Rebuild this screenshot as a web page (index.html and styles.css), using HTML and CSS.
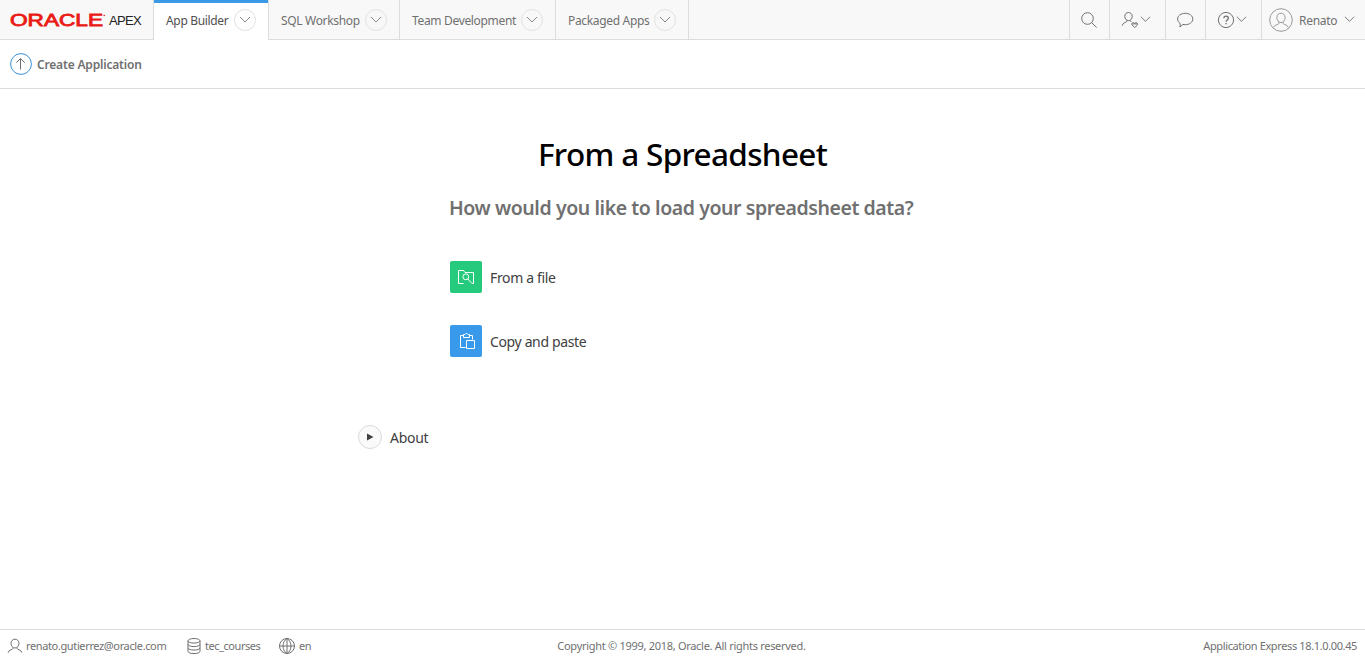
FILE: index.html
```
<!DOCTYPE html>
<html lang="en">
<head>
<meta charset="utf-8">
<title>Create Application</title>
<link rel="stylesheet" href="styles.css">
</head>
<body>
<svg class="defs" aria-hidden="true">
  <symbol id="chev" viewBox="0 0 12 12"><path d="M1 3l5 5 5-5"/></symbol>
  <symbol id="user" viewBox="0 0 16 16"><path d="M8 1.200c2.300 0 4 1.700 4 4.200S10.200 10 8 10 4 7.900 4 5.400s1.700-4.200 4-4.200zM6 9.600v.9c0 1.300-4.500 1-4.900 4.200M10 9.600v.9c0 1.300 4.500 1 4.900 4.200"/></symbol>
</svg>
<header class="header">
  <div class="brand">
    <svg class="logo" width="96" height="14" viewBox="0 0 96 14"><text class="logo-text" x="0" y="12.500" textLength="93" lengthAdjust="spacingAndGlyphs">ORACLE</text><circle class="logo-dot" cx="94.200" cy="2.500" r=".8"/></svg>
    <span class="apex">APEX</span>
  </div>
  <nav class="tabs">
    <a class="tab tab-builder active"><span class="label">App Builder</span><span class="drop"><svg width="12" height="12"><use href="#chev"/></svg></span></a>
    <a class="tab tab-sql"><span class="label">SQL Workshop</span><span class="drop"><svg width="12" height="12"><use href="#chev"/></svg></span></a>
    <a class="tab tab-team"><span class="label">Team Development</span><span class="drop"><svg width="12" height="12"><use href="#chev"/></svg></span></a>
    <a class="tab tab-apps"><span class="label">Packaged Apps</span><span class="drop"><svg width="12" height="12"><use href="#chev"/></svg></span></a>
  </nav>
  <div class="tools">
    <a class="tool tool-small"><svg width="18" height="18" viewBox="0 0 18 18"><circle cx="7.500" cy="7.500" r="5.800"/><path d="M11.700 11.700l5 4.800"/></svg></a>
    <a class="tool tool-wide"><svg width="18" height="18" viewBox="0 0 18 18"><path d="M7.500 1.500c2.100 0 3.700 1.600 3.700 3.900S9.600 9.700 7.500 9.700 3.800 7.700 3.800 5.400s1.600-3.900 3.700-3.900zM5.800 9.500v.8c0 1.300-4.200 1-4.600 4.400M9.400 9.500l.8 1.400"/><path d="M13.700 16.500l-2.400-2.200c-1.600-1.700.9-3.900 2.400-1.900 1.500-2 4 .2 2.400 1.900zM11.200 12.900h5"/></svg><svg class="chev" width="11" height="11"><use href="#chev"/></svg></a>
    <a class="tool tool-small"><svg width="18" height="18" viewBox="0 0 18 18"><path d="M9.200 2.300c4.300 0 7.600 2.500 7.600 5.700s-3.400 5.700-7.600 5.700c-.9 0-1.700-.1-2.500-.3-.8 1.300-1.700 2-2.900 2.500.5-1.200.5-2.300.3-3.500C2.500 11.400 1.600 9.800 1.600 8c0-3.200 3.300-5.700 7.600-5.700z"/></svg></a>
    <a class="tool tool-wide"><svg width="18" height="18" viewBox="0 0 18 18"><circle cx="9" cy="9" r="7.600"/><path class="bold" d="M6.900 7.200c0-2.900 4.400-2.800 4.400 0 0 1.700-2.200 1.700-2.200 3.500M9.100 12v1.300"/></svg><svg class="chev" width="11" height="11"><use href="#chev"/></svg></a>
    <a class="tool tool-user"><svg class="avatar" width="24" height="24" viewBox="0 0 24 24"><circle cx="12" cy="12" r="11.300"/><path d="M12 5.200c2.500 0 4.100 1.800 4.100 4.400S14.400 14.600 12 14.600s-4.100-2.400-4.100-5 1.600-4.400 4.100-4.400zM10 14v1.300c0 1.400-4.500 1-5.200 3.900M14 14v1.300c0 1.400 4.500 1 5.200 3.900"/></svg><span class="label username">Renato</span><svg class="chev" width="11" height="11"><use href="#chev"/></svg></a>
  </div>
</header>
<div class="crumbs">
  <svg width="22" height="22" viewBox="0 0 22 22"><circle class="ring" cx="11" cy="11" r="10.400"/><path d="M10.500 16.500v-11M6.300 9.700l4.200-4.200 4.200 4.200"/></svg>
  <span class="crumb">Create Application</span>
</div>
<main class="main">
  <h1 class="title">From a Spreadsheet</h1>
  <div class="wizard">
    <h2 class="question">How would you like to load your spreadsheet data?</h2>
    <a class="option"><span class="tile green"><svg width="18" height="18" viewBox="0 0 18 18"><path d="M6.500 15.500h-5v-13h5l1.500 2h8.500v11h-1.500L10.900 11"/><circle cx="8.800" cy="8.800" r="2.900"/></svg></span><span class="option-text">From a file</span></a>
    <a class="option"><span class="tile blue"><svg width="18" height="18" viewBox="0 0 18 18"><path d="M5.500 3.500h-3v12h5M11.500 3.500h3v4M5.500 5.500v-3H7c.3-1.300 2.700-1.300 3 0h1.500v3zM8.500 8.500h8v8h-8z"/></svg></span><span class="option-text">Copy and paste</span></a>
  </div>
  <div class="about"><span class="play"><svg width="8" height="8" viewBox="0 0 8 8"><path d="M1 .5L7.500 4 1 7.500z"/></svg></span><span class="about-text">About</span></div>
</main>
<footer class="footer">
  <div class="foot-left">
    <span class="foot-item mail"><svg width="16" height="16"><use href="#user"/></svg><span>renato.gutierrez@oracle.com</span></span>
    <span class="foot-item db"><svg width="16" height="18" viewBox="0 0 16 18"><ellipse cx="8" cy="3.800" rx="6" ry="2.300"/><path d="M2 3.800v10.500c0 3 12 3 12 0V3.800M2 7.300c0 3 12 3 12 0M2 10.800c0 3 12 3 12 0"/></svg><span>tec_courses</span></span>
    <span class="foot-item lang"><svg width="18" height="18" viewBox="0 0 18 18"><circle cx="9" cy="9" r="7.500"/><path d="M1.500 9h15M9 1.500v15M9 1.500c-5.300 3-5.300 12 0 15M9 1.500c5.300 3 5.300 12 0 15"/></svg><span>en</span></span>
  </div>
  <div class="copyright">Copyright © 1999, 2018, Oracle. All rights reserved.</div>
  <div class="version">Application Express 18.1.0.00.45</div>
</footer>
</body>
</html>
```
FILE: styles.css
```
* { box-sizing: border-box; }
body {
  margin: 0;
  height: 660px;
  display: flex;
  flex-direction: column;
  overflow: hidden;
  background: #fff;
  color: #404040;
  font-family: "Noto Sans", "Open Sans", sans-serif;
  font-size: 12px;
}
.defs { display: none; }
svg { flex: none; fill: none; stroke: #707070; stroke-width: 1; }
span, div, h1, h2 { white-space: nowrap; }

.header { display: flex; height: 40px; flex: none; background: #f8f8f8; border-bottom: 1px solid #dcdcdc; }
.brand { display: flex; align-items: center; width: 154px; padding-left: 10px; border-right: 1px solid #dcdcdc; }
.logo { overflow: visible; }
.logo-text { font: 16px "Liberation Sans", sans-serif; fill: #ea1b16; stroke: #ea1b16; stroke-width: .8; }
.logo-dot { fill: #ea1b16; stroke: none; }
.apex { margin: 2px 0 0 3px; font: 13px "Liberation Sans", sans-serif; letter-spacing: -.7px; color: #222; }
.tabs { display: flex; }
.tab { display: flex; align-items: center; justify-content: space-between; height: 39px; padding: 0 12px; border-right: 1px solid #dcdcdc; letter-spacing: -.33px; }
.tab.active { height: 40px; padding-bottom: 1px; background: #fff; box-shadow: inset 0 3px #3b99e8; }
.label { color: #707070; padding-top: 2px; }
.active .label { color: #505050; }
.drop { display: flex; align-items: center; justify-content: center; width: 22px; height: 22px; border: 1px solid #e2e2e2; border-radius: 50%; }
.drop svg { stroke: #888; }
.tab-builder { width: 115px; }
.tab-sql { width: 131px; }
.tab-team { width: 156px; }
.tab-apps { width: 133px; }
.tools { display: flex; margin-left: auto; }
.tool { display: flex; align-items: center; justify-content: center; border-left: 1px solid #dcdcdc; }
.tool-small { width: 40px; padding-right: 2px; }
.tool-wide { width: 56px; gap: 1px; padding-right: 3px; }
.tool-user { width: 104px; justify-content: flex-start; padding-left: 7px; }
.avatar { stroke: #999; }
.bold { stroke-width: 1.300; }
.username { margin: 0 7px 0 6px; width: 38px; letter-spacing: -.3px; }

.crumbs { display: flex; align-items: center; gap: 5px; height: 49px; flex: none; padding-left: 10px; border-bottom: 1px solid #dcdcdc; }
.ring { stroke: #3b8fd8; }
.crumb { font-weight: 600; color: #707070; letter-spacing: -.18px; padding-top: 1px; }

.main { flex: 1; padding: 39px 358px 0; }
.title { margin: 0; font-size: 31.500px; font-weight: 500; line-height: 52px; text-align: center; color: #000; letter-spacing: -.67px; }
.wizard { padding: 14px 0 0 92px; }
.question { margin: 0 0 39px -1px; font-size: 19.500px; font-weight: 600; line-height: 28px; color: #707070; letter-spacing: -.42px; }
.option { display: flex; align-items: center; gap: 8px; height: 32px; margin-bottom: 32px; font-size: 14px; letter-spacing: -.36px; }
.tile { display: flex; align-items: center; justify-content: center; width: 32px; height: 32px; border-radius: 2px; }
.tile svg { stroke: #fff; }
.blue svg { margin-left: 1px; }
.green { background: #26ca7d; }
.blue { background: #3999ea; }
.about { display: flex; align-items: center; gap: 8px; margin-top: 68px; font-size: 14px; letter-spacing: -.3px; }
.play { display: flex; align-items: center; justify-content: center; width: 24px; height: 24px; border: 1px solid #dadada; border-radius: 50%; background: #fafafa; }
.play svg { fill: #404040; stroke: none; }

.footer { display: grid; grid-template-columns: 1fr auto 1fr; align-items: center; height: 31px; flex: none; padding: 1px 8px 0 7px; border-top: 1px solid #dcdcdc; color: #707070; font-size: 11px; letter-spacing: -.37px; }
.foot-left { display: flex; align-items: center; }
.foot-item { display: flex; align-items: center; gap: 3px; }
.mail { width: 179px; }
.db { width: 92px; letter-spacing: -.45px; }
.copyright { letter-spacing: -.29px; padding-right: 1px; }
.version { text-align: right; }
```
